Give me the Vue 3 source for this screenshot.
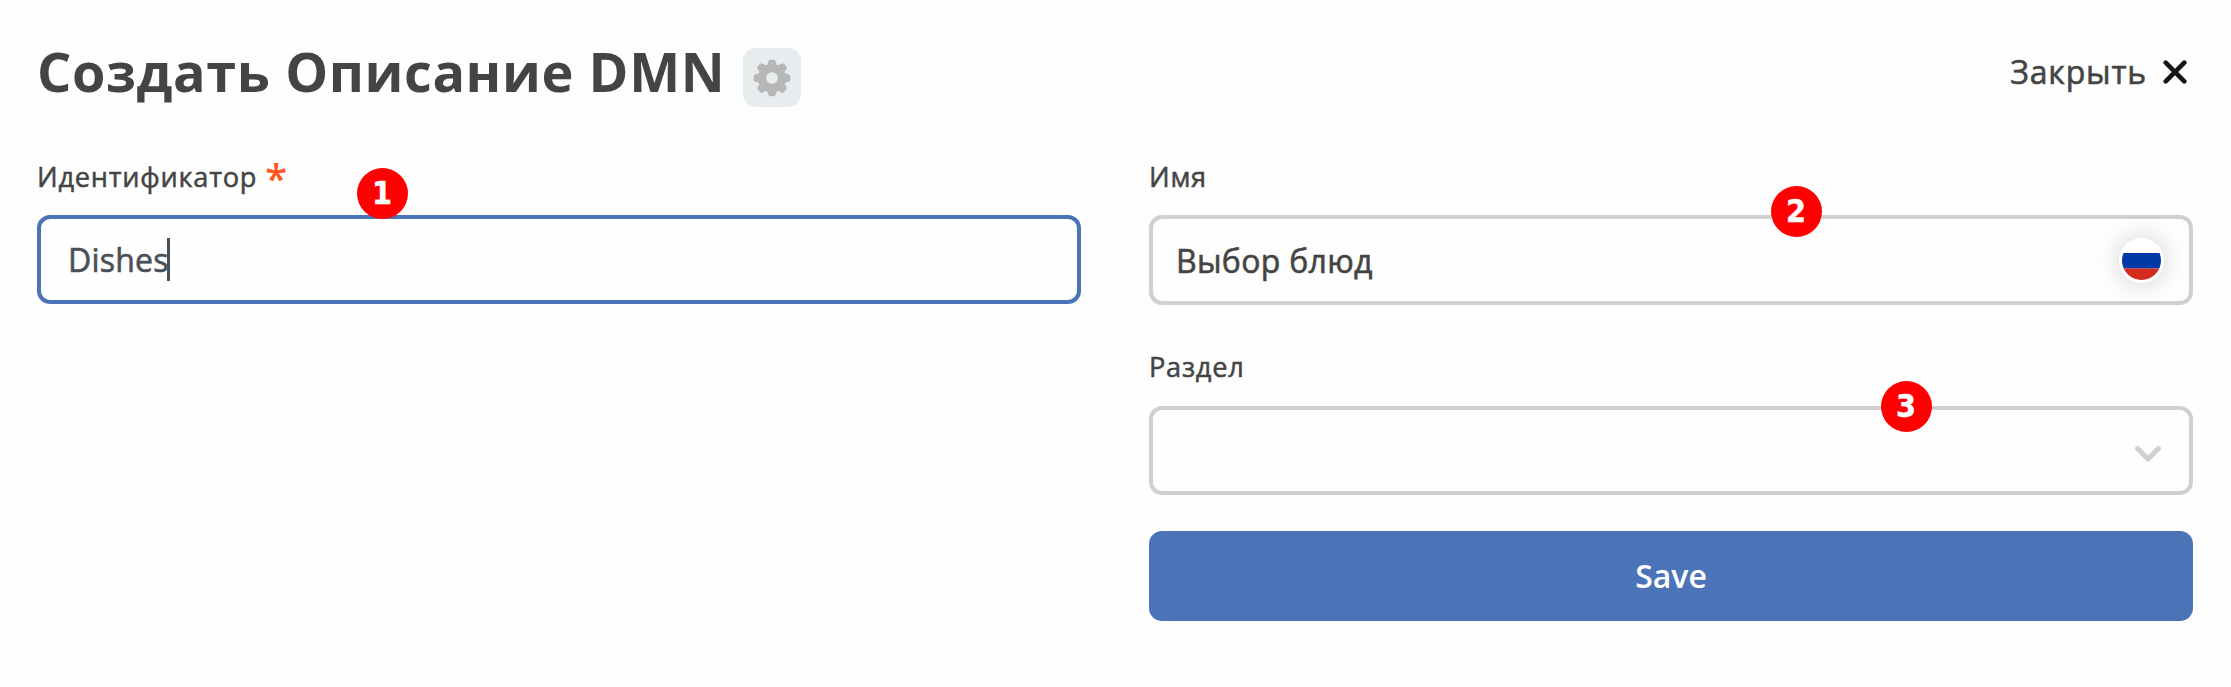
<script setup>
const teeth = [0, 45, 90, 135, 180, 225, 270, 315]
</script>

<template>
  <main class="page">
    <header class="head">
      <h1 class="title">Создать Описание DMN</h1>
      <button class="gear" type="button" aria-label="Настройки">
        <svg width="38" height="38" viewBox="-19 -19 38 38">
          <path class="gear-fill" fill-rule="evenodd" d="M0-13.4a13.4 13.4 0 1 0 .01 0zM0-5.8a5.8 5.8 0 1 1-.01 0z" />
          <path
            v-for="a in teeth"
            :key="a"
            class="gear-fill"
            :transform="`rotate(${a})`"
            d="M-6.5-11.6Q-4.2-13-3.7-16.6Q-3.4-18.3-1.8-18.3H1.8Q3.4-18.3 3.7-16.6Q4.2-13 6.5-11.6z"
          />
        </svg>
      </button>
      <button class="close" type="button">
        <span class="close-text">Закрыть</span>
        <svg width="24" height="24" viewBox="0 0 24 24">
          <path d="M2.7 2.7L21.3 21.3M21.3 2.7L2.7 21.3" stroke="#161616" stroke-width="4.6" stroke-linecap="round" />
        </svg>
      </button>
    </header>

    <div class="form">
      <section>
        <div class="label"><span class="label-id">Идентификатор</span><span class="star">*</span></div>
        <div class="field focused">
          <span class="value-id">Dishes</span><i class="caret"></i>
          <b class="badge b1">1</b>
        </div>
      </section>

      <section>
        <div class="label"><span>Имя</span></div>
        <div class="field name">
          <span class="value">Выбор блюд</span>
          <span class="flag">
            <svg width="39" height="39" viewBox="0 0 39 39">
              <clipPath id="round"><circle cx="19.5" cy="19.5" r="19.5" /></clipPath>
              <g clip-path="url(#round)">
                <rect width="39" height="39" fill="#fff" />
                <rect y="12" width="39" height="15.5" fill="#0039a6" />
                <rect y="27.5" width="39" height="12" fill="#d52b1e" />
              </g>
            </svg>
          </span>
          <b class="badge b2">2</b>
        </div>
        <div class="label second"><span>Раздел</span></div>
        <div class="field select">
          <svg width="28" height="18" viewBox="0 0 28 18">
            <path d="M3.5 3.5L14 14L24.5 3.5" fill="none" stroke="#d0d0d0" stroke-width="5" stroke-linecap="round" stroke-linejoin="round" />
          </svg>
          <b class="badge b3">3</b>
        </div>
        <button class="save" type="button">Save</button>
      </section>
    </div>
  </main>
</template>

<style>
body {
  background: #fefefe;
}
</style>

<style scoped>
.page {
  box-sizing: border-box;
  height: 687px;
  padding: 0 38px 0 37px;
  font-family: "Open Sans", "Noto Sans", sans-serif;
  color: #444;
  background: #fefefe;
}
button {
  border: 0;
  padding: 0;
  font: inherit;
  color: inherit;
  background: none;
}
.head {
  display: flex;
  align-items: center;
  height: 143px;
}
.title {
  margin: 0 0 2px;
  width: 706px;
  font-size: 54px;
  font-weight: 700;
  line-height: 74px;
  letter-spacing: 0.6px;
  white-space: nowrap;
}
.gear {
  display: flex;
  align-items: center;
  justify-content: center;
  width: 58px;
  height: 59px;
  margin-top: 12px;
  border-radius: 13px;
  background: #e7edef;
}
.gear-fill {
  fill: #b7b7b7;
}
.close {
  display: flex;
  align-items: center;
  gap: 16px;
  margin-left: auto;
  margin-right: 6px;
  font-size: 32px;
}
.close-text {
  letter-spacing: 0.8px;
  -webkit-text-stroke: 0.6px currentColor;
}
.form {
  display: grid;
  grid-template-columns: 1044px 1044px;
  gap: 68px;
}
.label {
  display: flex;
  box-sizing: border-box;
  height: 72px;
  font-size: 27.2px;
  line-height: 67px;
  letter-spacing: 0.75px;
  -webkit-text-stroke: 0.5px currentColor;
}
.label.second {
  height: 101px;
  padding-top: 28px;
}
.star {
  margin-left: 8px;
  font-size: 40px;
  font-weight: 600;
  line-height: 70px;
  letter-spacing: 0;
  color: #ff5722;
  -webkit-text-stroke: 0;
}
.field {
  position: relative;
  box-sizing: border-box;
  display: flex;
  align-items: center;
  height: 89px;
  padding: 0 23px;
  border: 4px solid #d0d0d0;
  border-radius: 13px;
  font-size: 32px;
  line-height: 44px;
}
.focused {
  border-color: #4b74b8;
  padding-left: 27px;
  color: #495057;
}
.value-id,
.value {
  letter-spacing: 0.2px;
  -webkit-text-stroke: 0.6px currentColor;
}
.value {
  margin-top: 2px;
  letter-spacing: 0.3px;
}
.name {
  height: 90px;
}
.caret {
  width: 3px;
  height: 43px;
  margin-left: -2px;
  background: #495057;
}
.flag {
  display: flex;
  align-items: center;
  justify-content: center;
  width: 45px;
  height: 45px;
  margin-left: auto;
  margin-right: 2px;
  border-radius: 50%;
  background: #fff;
  box-shadow: 0 0 26px rgba(0, 0, 0, 0.19);
}
.select {
  justify-content: flex-end;
  padding-right: 27px;
}
.select svg {
  margin-top: 7px;
}
.badge {
  position: absolute;
  width: 51px;
  height: 51px;
  border-radius: 50%;
  background: #f00;
  color: #fff;
  font: 700 32px/50px "DejaVu Sans", sans-serif;
  font-stretch: condensed;
  -webkit-text-stroke: 0.4px currentColor;
  text-align: center;
}
.b1 {
  left: 315.5px;
  top: -51px;
}
.b2 {
  left: 617.5px;
  top: -33px;
}
.b3 {
  left: 727.5px;
  top: -29.5px;
}
.save {
  display: block;
  width: 1044px;
  height: 90px;
  margin-top: 36px;
  padding-bottom: 2px;
  border-radius: 13px;
  background: #4b74b8;
  color: #fff;
  font-size: 32px;
  font-weight: 600;
}
</style>
